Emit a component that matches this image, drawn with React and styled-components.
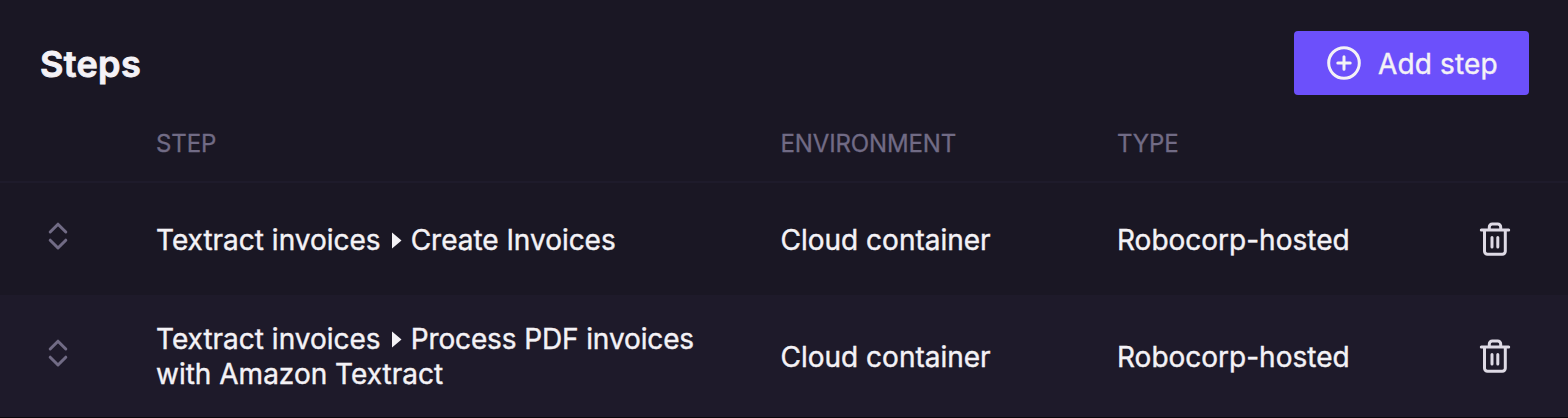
import React from "react";
import styled, { createGlobalStyle } from "styled-components";

const GlobalStyle = createGlobalStyle`
  body {
    margin: 0;
    background: #1a1724;
    overflow: hidden;
  }
`;

const Panel = styled.main`
  box-sizing: border-box;
  height: 418px;
  display: flex;
  flex-direction: column;
  background: #1a1724;
  border-bottom: 1px solid #08070c;
  color: #f4f2f6;
  font-family: Inter, "Liberation Sans", sans-serif;
  font-size: 28px;
  line-height: 35px;
  -webkit-text-stroke: 0.4px currentColor;
`;

const Header = styled.header`
  display: flex;
  align-items: center;
  justify-content: space-between;
  height: 64px;
  padding: 31px 39px 0 40px;
`;

const Title = styled.h1`
  margin: 0;
  padding-top: 2px;
  font-size: 36px;
  line-height: 44px;
  font-weight: 600;
  letter-spacing: 0.35px;
  -webkit-text-stroke-width: 0.9px;
`;

const AddButton = styled.button`
  display: flex;
  align-items: center;
  gap: 16px;
  width: 235px;
  height: 64px;
  padding: 0 0 0 32px;
  border: 0;
  border-radius: 4px;
  background: #6c50fb;
  color: #f4f2f6;
  font: inherit;
  letter-spacing: 0.15px;
  white-space: nowrap;
`;

const ButtonLabel = styled.span`
  padding-top: 2px;
`;

const Row = styled.div`
  display: grid;
  grid-template-columns: 156px 624.5px 336.5px 360px 36px;
  align-items: center;
  height: ${(p) => p.$height}px;
  background: ${(p) => (p.$raised ? "#1e1a2a" : "transparent")};
`;

const HeadRow = styled(Row)`
  box-sizing: border-box;
  border-bottom: 2px solid #1e1b2b;
  padding-top: 9px;
  color: #716b85;
  font-size: 24px;
  line-height: 30px;
  letter-spacing: -0.13px;
  -webkit-text-stroke-width: 0.3px;
`;

const Cell = styled.div`
  padding-top: 2px;
  white-space: nowrap;
`;

const TaskName = styled.span`
  letter-spacing: ${(p) => p.$tracking || 0}px;
`;

const Handle = styled.div`
  display: flex;
  padding: 0 0 6px 46px;
`;

const Arrow = styled.svg`
  width: 10px;
  height: 17px;
  margin: 0 8.5px 0 11.5px;
  vertical-align: 1px;
`;

const Icon = styled.svg`
  display: block;
  flex: none;
  fill: none;
  stroke: ${(p) => p.$color || "#f4f2f6"};
  stroke-width: 3;
  stroke-linecap: round;
  stroke-linejoin: round;
`;

const PlusIcon = () => (
  <Icon width="36" height="36" viewBox="0 0 36 36">
    <circle cx="18" cy="18" r="15.3" />
    <path d="M18 11.800v12.400M11.800 18h12.400" />
  </Icon>
);

const SortIcon = () => (
  <Icon width="24" height="30" viewBox="0 0 24 30" $color="#716b85">
    <path d="M4.200 11 12 3.200 19.800 11M4.200 19.200 12 27 19.800 19.200" />
  </Icon>
);

const TrashIcon = () => (
  <Icon width="36" height="36" viewBox="0 0 36 36" $color="#dedae5">
    <path d="M4.300 9h27.400M7.500 9v21.200a3 3 0 0 0 3 3h14.800a3 3 0 0 0 3-3V9M12.300 9V6a3 3 0 0 1 3-3h5.400a3 3 0 0 1 3 3V9M15 16.500v9.500M20.800 16.500v9.500" />
  </Icon>
);

const steps = [
  {
    robot: "Textract invoices",
    task: ["Create Invoices"],
    height: 112,
    tracking: -0.03,
  },
  {
    robot: "Textract invoices",
    task: ["Process PDF invoices", "with Amazon Textract"],
    height: 122,
    raised: true,
    tracking: -0.12,
  },
];

export default function App() {
  return (
    <>
      <GlobalStyle />
      <Panel>
        <Header>
          <Title>Steps</Title>
          <AddButton>
            <PlusIcon />
            <ButtonLabel>Add step</ButtonLabel>
          </AddButton>
        </Header>
        <HeadRow $height={88}>
          <span />
          <Cell>STEP</Cell>
          <Cell>ENVIRONMENT</Cell>
          <Cell>TYPE</Cell>
        </HeadRow>
        {steps.map((s) => (
          <Row key={s.task[0]} $height={s.height} $raised={s.raised}>
            <Handle>
              <SortIcon />
            </Handle>
            <Cell>
              {s.robot}
              <Arrow viewBox="0 0 10 17">
                <path d="M0 .5 9.500 8.500 0 16.500Z" fill="#f4f2f6" />
              </Arrow>
              <TaskName $tracking={s.tracking}>{s.task[0]}</TaskName>
              {s.task[1] && <br />}
              {s.task[1]}
            </Cell>
            <Cell>Cloud container</Cell>
            <Cell>Robocorp-hosted</Cell>
            <TrashIcon />
          </Row>
        ))}
      </Panel>
    </>
  );
}
